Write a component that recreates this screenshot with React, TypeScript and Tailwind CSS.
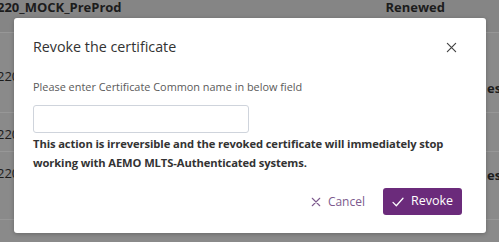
import React from "react";

function XIcon({ className }: { className?: string }) {
  return (
    <svg viewBox="0 0 12 12" className={className} fill="none" stroke="currentColor" strokeWidth="1.3" strokeLinecap="round">
      <path d="M1.5 1.5 L10.5 10.5 M10.5 1.5 L1.5 10.5" />
    </svg>
  );
}

function CheckIcon({ className }: { className?: string }) {
  return (
    <svg viewBox="0 0 14 12" className={className} fill="none" stroke="currentColor" strokeWidth="1.5" strokeLinecap="round" strokeLinejoin="round">
      <path d="M1 6.5 L5 10.5 L13 1.5" />
    </svg>
  );
}

function Peek({ left, top, width, text, bold }: { left: number; top: number; width: number; text: string; bold?: boolean }) {
  return (
    <div
      className={"absolute overflow-hidden whitespace-nowrap " + (bold ? "font-bold" : "font-normal")}
      style={{ left, top, width }}
    >
      {text}
    </div>
  );
}

export default function App() {
  const font = { fontFamily: '"Open Sans", "Noto Sans", sans-serif' };
  return (
    <div className="relative w-[499px] h-[242px] overflow-hidden bg-[#8a8a8a]" style={font}>
      {/* background table */}
      <div className="flex flex-col text-[13px] font-bold text-[#1c1c1c]">
        <div className="h-[33px] bg-[#858585] border-b border-[#979797] flex items-start justify-between whitespace-nowrap">
          <span className="-ml-[3px] leading-[15px]">220_MOCK_PreProd</span>
          <span className="mr-[54px] leading-[15px]">Renewed</span>
        </div>
        <div className="h-[80px] border-b border-[#979797] relative">
          <Peek left={-3} top={34} width={17} text="220_MOCK" />
          <Peek left={487} top={46} width={12} text="es in use" bold />
        </div>
        <div className="h-[39px] border-b border-[#979797] relative">
          <Peek left={-3} top={12} width={17} text="220_MOCK" />
        </div>
        <div className="h-[68px] border-b border-[#979797] relative">
          <Peek left={-3} top={12} width={17} text="220_MOCK" />
          <Peek left={487} top={14} width={12} text="es in use" bold />
        </div>
      </div>

      {/* modal */}
      <div className="absolute left-[14px] top-[18px] w-[472px] h-[215px] bg-white rounded-[3px] shadow-[0_1px_4px_rgba(0,0,0,0.25)] px-[19px] pt-[19px]">
        <div className="flex items-center justify-between">
          <h2 className="text-[14.3px] leading-[20px] text-[#333333]">Revoke the certificate</h2>
          <XIcon className="w-[11px] h-[11px] text-[#444444] mr-[10px]" />
        </div>
        <p className="mt-[22px] text-[10.9px] leading-[16px] text-[#5a5a5a]">Please enter Certificate Common name in below field</p>
        <input className="mt-[10px] block w-[216px] h-[28px] border border-[#cfd4dc] rounded-[3px] outline-none" />
        <p className="mt-[1px] text-[11.2px] leading-[19px] font-bold text-[#333333] tracking-[-0.1px]">
          This action is irreversible and the revoked certificate will immediately stop working with AEMO MLTS-Authenticated systems.
        </p>
        <div className="mt-[16px] flex items-center justify-end gap-[18px] pr-[5px]">
          <button className="flex items-center gap-[7px] text-[12px] text-[#7d5a8e]">
            <XIcon className="w-[10px] h-[10px]" />
            <span>Cancel</span>
          </button>
          <button className="flex items-center justify-center gap-[7px] w-[79px] h-[27px] rounded-[3px] bg-[#6b2b7b] text-white text-[12.5px]">
            <CheckIcon className="w-[12px] h-[10px]" />
            <span>Revoke</span>
          </button>
        </div>
      </div>
    </div>
  );
}
